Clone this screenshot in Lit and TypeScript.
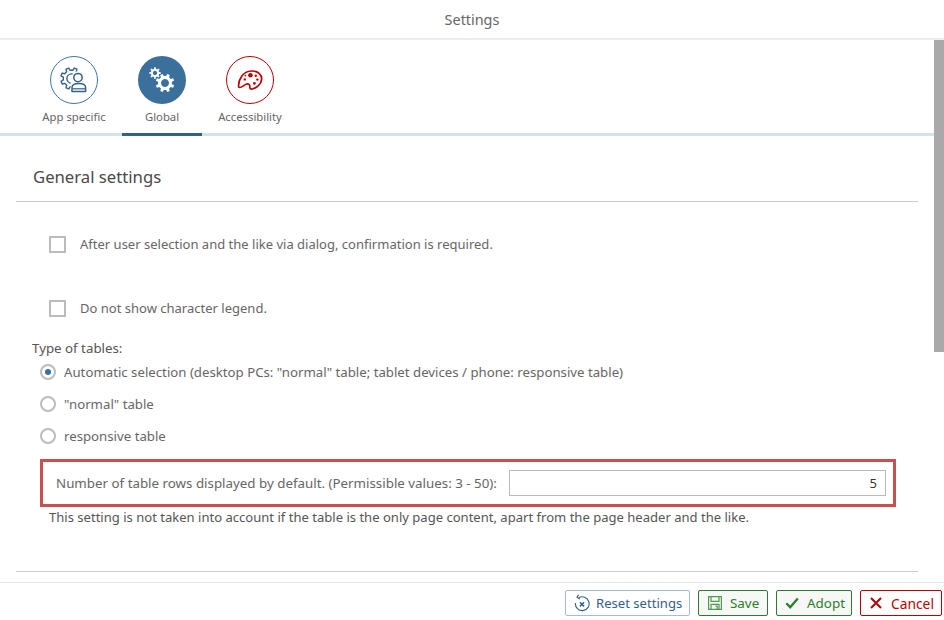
import { LitElement, html, css } from "lit";
import { customElement } from "lit/decorators.js";

function gear(cx: number, cy: number, ro: number, ri: number, teeth: number, start = 0): string {
  const pts: string[] = [];
  const step = (Math.PI * 2) / teeth;
  for (let i = 0; i < teeth; i++) {
    const a = start + i * step;
    const w = step / 4;
    const list: [number, number][] = [
      [ri, a - w * 1.15],
      [ro, a - w * 0.7],
      [ro, a + w * 0.7],
      [ri, a + w * 1.15],
    ];
    for (const [r, t] of list) pts.push(`${(cx + r * Math.cos(t)).toFixed(2)} ${(cy + r * Math.sin(t)).toFixed(2)}`);
  }
  return "M" + pts.join("L") + "Z";
}

const appIcon = html`<svg viewBox="0 0 48 48" width="48" height="48" fill="none">
  <defs>
    <mask id="person-cut" maskUnits="userSpaceOnUse" x="0" y="0" width="48" height="48">
      <rect width="48" height="48" fill="#fff"/>
      <circle cx="28" cy="21.5" r="6.2" fill="#000"/>
      <rect x="20.6" y="26" width="17" height="12" fill="#000"/>
    </mask>
  </defs>
  <circle cx="24" cy="24" r="23.5" stroke="#3f76a6" stroke-width="1"/>
  <g mask="url(#person-cut)" stroke="#346187" stroke-width="1.4" stroke-linejoin="round">
    <path d="${gear(21.5, 22.5, 10.8, 8.3, 8, 0.39)}"/>
    <circle cx="21.5" cy="22.5" r="4.6"/>
  </g>
  <circle cx="28" cy="21.6" r="4.2" stroke="#346187" stroke-width="1.5"/>
  <path d="M22 35.4 V31.6 C22 29 24.6 27.6 28.8 27.6 C33 27.6 35.6 29 35.6 31.6 V35.4 Z" stroke="#346187" stroke-width="1.5" stroke-linejoin="round"/>
  <path d="M22.4 32.8 H35.2" stroke="#346187" stroke-width="1.2"/>
</svg>`;

const globalIcon = html`<svg viewBox="0 0 48 48" width="48" height="48">
  <circle cx="24" cy="24" r="24" fill="#3b6f9c"/>
  <path fill-rule="evenodd" fill="#fff" d="${gear(27, 27, 9.4, 7, 8, 0.39) + " M27 23a4 4 0 1 0 .01 0Z"}"/>
  <path fill-rule="evenodd" fill="#fff" d="${gear(17, 17, 5.8, 4.2, 8, 0) + " M17 14.8a2.2 2.2 0 1 0 .01 0Z"}"/>
</svg>`;

const paletteIcon = html`<svg viewBox="0 0 48 48" width="48" height="48" fill="none">
  <circle cx="24" cy="24" r="23.5" stroke="#bb0000" stroke-width="1"/>
  <path d="M12.5 30 C12.6 24 16.5 15.2 25.5 15 C32 14.8 36 18.5 35.6 23.6 C35.2 28.6 30 32.4 26 33 C24.2 33.3 23.6 32 23.8 30.5 C24 28.6 22.4 27.4 20.6 28 C18 28.9 15.8 31.5 13.8 31.5 C13 31.5 12.5 31 12.5 30 Z" stroke="#bb0000" stroke-width="1.7" stroke-linejoin="round"/>
  <circle cx="24.4" cy="19.2" r="2.3" fill="#bb0000"/>
  <circle cx="18.8" cy="23.4" r="1.2" fill="#bb0000"/>
  <circle cx="19.4" cy="19.6" r="0.9" fill="#bb0000"/>
  <circle cx="29.8" cy="19.8" r="1.2" fill="#bb0000"/>
  <circle cx="31.4" cy="23.6" r="1.2" fill="#bb0000"/>
  <circle cx="28.4" cy="27.4" r="1.4" fill="#bb0000"/>
</svg>`;

const resetIcon = html`<svg viewBox="0 0 16 18" width="16" height="18" fill="none" stroke="#346187" stroke-width="1.1">
  <path d="M4.6 3.9 A6.9 6.9 0 1 1 1.4 9"/>
  <path d="M4.6 0.8 L3 3.4 L5.8 5"/>
  <path d="M5.9 8.2 L10.1 12.4 M10.1 8.2 L5.9 12.4" stroke-width="1.5"/>
</svg>`;

const saveIcon = html`<svg viewBox="0 0 16 16" width="16" height="16" fill="none" stroke="#4f9a4f" stroke-width="1.2">
  <path d="M1.6 1.6 H14.4 V14.4 H1.6 Z" stroke-linejoin="round"/>
  <path d="M4 1.8 V6.4 H12 V1.8"/>
  <path d="M4 14.2 V9.4 H12 V14.2"/>
  <path d="M8.4 11 H10.2 V14"/>
</svg>`;

const checkIcon = html`<svg viewBox="0 0 14 14" width="14" height="14" fill="none" stroke="#2b7d2b" stroke-width="2.3">
  <path d="M1.4 7.2 L5.2 11.2 L12.8 2.4"/>
</svg>`;

const crossIcon = html`<svg viewBox="0 0 14 14" width="14" height="14" fill="none" stroke="#bb0000" stroke-width="2">
  <path d="M2 2 L12 12 M12 2 L2 12"/>
</svg>`;

@customElement("app-root")
export class AppRoot extends LitElement {
  static styles = css`
    :host {
      display: flex;
      flex-direction: column;
      position: relative;
      width: 944px;
      height: 620px;
      overflow: hidden;
      background: #fff;
      font-family: "Noto Sans", "Open Sans", sans-serif;
      font-size: 13.03px;
      color: #666;
    }
    .title {
      height: 38px;
      flex: none;
      display: flex;
      align-items: center;
      justify-content: center;
      font-size: 14.4px;
      color: #666;
      border-bottom: 2px solid #ececec;
    }
    .tabs {
      flex: none;
      display: flex;
      padding-left: 30px;
      padding-top: 16px;
      box-sizing: border-box;
      border-bottom: 3px solid #d5e2ee;
      height: 96px;
    }
    .tab {
      width: 88px;
      height: 80px;
      display: flex;
      flex-direction: column;
      align-items: center;
      gap: 5px;
      font-size: 11.3px;
      line-height: 16px;
      color: #666;
    }
    .tab svg { display: block; }
    .wrap { width: 88px; display: flex; justify-content: center; }
    .wrap .tab { width: 80px; height: 80px; box-sizing: border-box; border-bottom: 3px solid #346187; }
    .body {
      flex: 1;
      min-height: 0;
      padding: 0 26px 0 16px;
      display: flex;
      flex-direction: column;
    }
    h2 {
      margin: 0;
      height: 66px;
      box-sizing: border-box;
      padding: 29px 0 0 17px;
      font-size: 16.7px;
      line-height: 24px;
      font-weight: 400;
      color: #4a4a4a;
      border-bottom: 1px solid #ccc;
    }
    .check {
      display: flex;
      align-items: center;
      gap: 14px;
      padding-left: 33px;
      height: 16px;
    }
    .check i {
      width: 13px;
      height: 13px;
      border: 2px solid #bbb;
      display: block;
      flex: none;
    }
    .c1 { margin-top: 34px; }
    .c2 { margin-top: 48px; }
    .type { margin: 23px 0 0 16px; line-height: 18px; color: #555; font-size: 13.3px; }
    .radios { display: flex; flex-direction: column; gap: 14px; margin: 6px 0 0 24px; font-size: 13.23px; }
    .radio { display: flex; align-items: center; gap: 8px; height: 18px; }
    .radio i {
      width: 12px;
      height: 12px;
      border: 2px solid #bbb;
      border-radius: 50%;
      display: flex;
      align-items: center;
      justify-content: center;
      flex: none;
    }
    .radio i b { width: 6px; height: 6px; background: #3b6f9c; border-radius: 50%; }
    .hl {
      margin: 14px 0 0 24px;
      width: 856px;
      height: 48px;
      box-sizing: border-box;
      border: 3px solid #c9504f;
      display: flex;
      align-items: center;
      padding-left: 13px;
      font-size: 13.33px;
    }
    .hl .input {
      width: 377px;
      height: 26px;
      box-sizing: border-box;
      border: 1px solid #bbb;
      margin-left: 12px;
      text-align: right;
      padding-right: 8px;
      line-height: 24px;
      color: #333;
      font-size: 13px;
    }
    .note { margin: 1px 0 0 33px; line-height: 18px; color: #555; font-size: 13.05px; }
    .rule { margin-top: 45px; border-top: 1px solid #ccc; }
    .foot {
      position: absolute;
      left: 0;
      right: 0;
      bottom: 0;
      height: 38px;
      background: #fff;
      border-top: 1px solid #e8e8e8;
      box-sizing: border-box;
      display: flex;
      justify-content: flex-end;
      align-items: flex-start;
      padding: 7px 2px 0 0;
      gap: 8px;
    }
    .btn {
      height: 26px;
      box-sizing: border-box;
      border: 1px solid #2b7d2b;
      border-radius: 2px;
      background: #f7f7f7;
      display: flex;
      align-items: center;
      padding-left: 8px;
      color: #2b7d2b;
      font-size: 13.4px;
      white-space: nowrap;
    }
    .btn svg { flex: none; }
    .reset { width: 125px; border-color: #a5bed3; background: #fff; color: #346187; gap: 6px; font-size: 13.1px; }
    .save { width: 70px; gap: 7px; }
    .adopt { width: 76px; gap: 8px; }
    .cancel { width: 82px; border-color: #bb0000; color: #bb0000; background: #fff; gap: 8px; font-size: 13.8px; }
    .scroll {
      position: absolute;
      right: 0;
      top: 40px;
      width: 10px;
      height: 312px;
      background: #a9a9a9;
    }
  `;

  render() {
    return html`
      <div class="title">Settings</div>
      <div class="tabs">
        <div class="tab">${appIcon}<span>App specific</span></div>
        <div class="wrap"><div class="tab">${globalIcon}<span>Global</span></div></div>
        <div class="tab">${paletteIcon}<span>Accessibility</span></div>
      </div>
      <div class="body">
        <h2>General settings</h2>
        <div class="check c1"><i></i><span>After user selection and the like via dialog, confirmation is required.</span></div>
        <div class="check c2"><i></i><span>Do not show character legend.</span></div>
        <div class="type">Type of tables:</div>
        <div class="radios">
          <div class="radio"><i><b></b></i><span>Automatic selection (desktop PCs: "normal" table; tablet devices / phone: responsive table)</span></div>
          <div class="radio"><i></i><span>"normal" table</span></div>
          <div class="radio"><i></i><span>responsive table</span></div>
        </div>
        <div class="hl">
          <span>Number of table rows displayed by default. (Permissible values: 3 - 50):</span>
          <div class="input">5</div>
        </div>
        <div class="note">This setting is not taken into account if the table is the only page content, apart from the page header and the like.</div>
        <div class="rule"></div>
      </div>
      <div class="foot">
        <div class="btn reset">${resetIcon}<span>Reset settings</span></div>
        <div class="btn save">${saveIcon}<span>Save</span></div>
        <div class="btn adopt">${checkIcon}<span>Adopt</span></div>
        <div class="btn cancel">${crossIcon}<span>Cancel</span></div>
      </div>
      <div class="scroll"></div>
    `;
  }
}
